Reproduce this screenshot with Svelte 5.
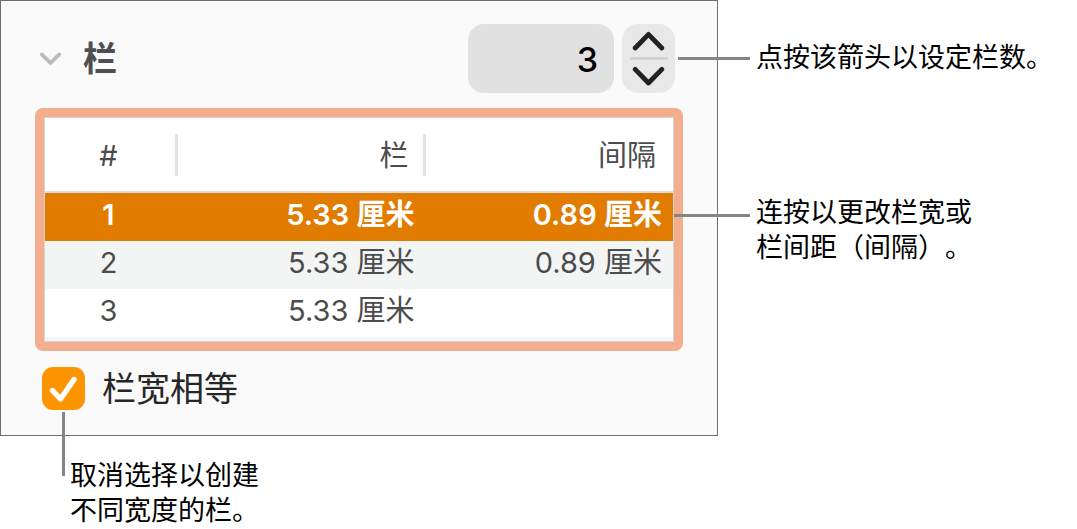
<script>
  let count = $state(3);
  let equal = $state(true);
  let selected = $state(1);

  const width = '5.33 厘米';
  const gutter = '0.89 厘米';

  const rows = $derived(
    Array.from({ length: count }, (_, i) => ({
      n: i + 1,
      width,
      gap: i < count - 1 ? gutter : ''
    }))
  );
</script>

<main class="page">
  <section class="panel">
    <header class="bar">
      <button class="disclosure" type="button" aria-label="栏">
        <svg width="23" height="15" viewBox="0 0 23 15"><path d="M2.8 3.4 L11.5 12 L20.2 3.4" /></svg>
      </button>
      <h2 id="columns-title">栏</h2>
      <input class="count" type="text" inputmode="numeric" aria-labelledby="columns-title" bind:value={count} />
      <div class="stepper">
        <button type="button" aria-label="增加" onclick={() => (count = Math.min(5, count + 1))}>
          <svg width="33" height="20" viewBox="0 0 33 20"><path d="M3.2 17 L16.5 3.4 L29.8 17" /></svg>
        </button>
        <button type="button" aria-label="减少" onclick={() => (count = Math.max(1, count - 1))}>
          <svg width="33" height="20" viewBox="0 0 33 20"><path d="M3.2 3.4 L16.5 17 L29.8 3.4" /></svg>
        </button>
      </div>
    </header>

    <div class="frame">
      <table>
        <colgroup>
          <col class="c-num" />
          <col />
          <col />
        </colgroup>
        <thead>
          <tr><th scope="col">#</th><th scope="col">栏</th><th scope="col">间隔</th></tr>
        </thead>
        <tbody>
          {#each rows as row (row.n)}
            <tr class:selected={row.n === selected} onclick={() => (selected = row.n)}>
              <td>{row.n}</td>
              <td>{row.width}</td>
              <td>{row.gap}</td>
            </tr>
          {/each}
        </tbody>
      </table>
    </div>

    <label class="equal">
      <span class="box">
        <input type="checkbox" bind:checked={equal} />
        <svg width="43" height="43" viewBox="0 0 43 43"><path d="M10.5 23.5 L18.5 32 L32 12.5" /></svg>
      </span>
      <span class="caption">栏宽相等</span>
    </label>
  </section>

  <aside class="side">
    <p class="callout first">点按该箭头以设定栏数。</p>
    <p class="callout second">连按以更改栏宽或<br />栏间距（间隔）。</p>
  </aside>

  <p class="callout below">取消选择以创建<br />不同宽度的栏。</p>
</main>

<style>
  :global(body) {
    background: #fff;
  }

  .page {
    display: grid;
    grid-template-columns: minmax(0, 2fr) minmax(0, 1fr);
    font-family: Inter, 'Noto Sans CJK SC', sans-serif;
    color: #000;
  }

  .panel {
    box-sizing: border-box;
    display: flex;
    flex-direction: column;
    padding: 23px 34px 25px;
    border: 1px solid #6f6e73;
    background: #fafafa;
  }

  .bar {
    display: flex;
    align-items: center;
    padding: 0 8px 0 4px;
    margin-bottom: 15px;
  }

  button {
    display: flex;
    align-items: center;
    justify-content: center;
    margin: 0;
    padding: 0;
    border: 0;
    background: none;
  }

  svg {
    display: block;
    fill: none;
    stroke-linecap: round;
    stroke-linejoin: round;
  }

  .disclosure svg {
    stroke: #bbb;
    stroke-width: 3.8;
  }

  h2 {
    flex: 1;
    margin: 0 0 0 21px;
    font-size: 34px;
    line-height: 48px;
    font-weight: 600;
    color: #4f4f4f;
  }

  .count {
    box-sizing: border-box;
    width: 146px;
    height: 69px;
    padding: 2px 16px 0;
    border: 0;
    border-radius: 16px;
    background: #e1e1e1;
    color: #000;
    font: 500 34px Inter, sans-serif;
    text-align: right;
  }

  .stepper {
    display: flex;
    flex-direction: column;
    width: 53px;
    height: 69px;
    margin-left: 8px;
    border-radius: 16px;
    background: linear-gradient(#d3d3d3, #d3d3d3) center / 38px 3px no-repeat #e8e8e8;
  }

  .stepper button {
    flex: 1;
  }

  .stepper svg {
    stroke: #222;
    stroke-width: 4.8;
  }

  .frame {
    padding: 1px 1px 5px;
    border: 9px solid #f2ae8e;
    border-radius: 8px;
    background: #f4f5f5;
    box-shadow: inset 0 0 0 1px #d8d4d2;
  }

  table {
    width: 100%;
    border-collapse: separate;
    border-spacing: 0;
    table-layout: fixed;
    font-size: 29px;
    line-height: 44px;
    color: #4c4c4c;
  }

  .c-num {
    width: 133px;
  }

  th {
    height: 71px;
    padding: 2px 17px 0 0;
    border-bottom: 2px solid #dfdfdf;
    background: linear-gradient(#e2e2e2, #e2e2e2) right center / 3px 42px no-repeat #fff;
    font-weight: 400;
    text-align: right;
  }

  th:last-child {
    background: #fff;
  }

  td {
    height: 48px;
    padding: 0 11px 0 0;
    background: #fff;
    text-align: right;
    vertical-align: top;
  }

  th:first-child,
  td:first-child {
    padding-right: 6px;
    text-align: center;
  }

  tbody tr:nth-child(even) td {
    background: #f3f5f5;
  }

  tbody tr.selected td {
    background: #e17c00;
    color: #fff;
    font-weight: 600;
  }

  .equal {
    display: flex;
    gap: 17px;
    height: 43px;
    margin: 16px 0 0 7px;
    color: #262626;
  }

  .caption {
    font-size: 34px;
    line-height: 44px;
  }

  .box {
    display: grid;
  }

  .box input,
  .box svg {
    grid-area: 1 / 1;
  }

  .box input {
    appearance: none;
    width: 43px;
    height: 43px;
    margin: 0;
    border-radius: 11px;
    background: #d5d5d5;
  }

  .box input:checked {
    background: #fd9500;
  }

  .box svg {
    stroke: #fff;
    stroke-width: 5.4;
    pointer-events: none;
  }

  .box input:not(:checked) + svg {
    visibility: hidden;
  }

  .side {
    display: flex;
    flex-direction: column;
    gap: 120px;
    padding: 40px 0 0 38px;
  }

  .callout {
    position: relative;
    margin: 0;
    font-size: 27px;
    line-height: 35px;
    white-space: nowrap;
    text-spacing-trim: space-all;
  }

  .callout::before {
    content: '';
    position: absolute;
    background: #858585;
  }

  .first::before {
    top: 17px;
    left: -78px;
    width: 72px;
    height: 3px;
  }

  .second::before {
    top: 19px;
    left: -82px;
    width: 76px;
    height: 3px;
  }

  .below {
    grid-column: 1 / -1;
    padding: 22px 0 0 70px;
  }

  .below::before {
    top: -24px;
    left: 62px;
    width: 3px;
    height: 64px;
  }
</style>
